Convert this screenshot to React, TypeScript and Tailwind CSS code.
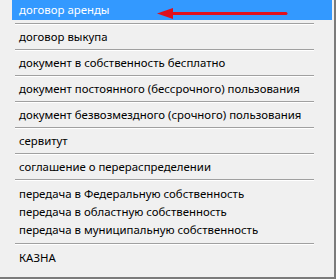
const groups: string[][] = [
  ['договор выкупа'],
  ['документ в собственность бесплатно'],
  ['документ постоянного (бессрочного) пользования'],
  ['документ безвозмездного (срочного) пользования'],
  ['сервитут'],
  ['соглашение о перераспределении'],
];

const transfers = [
  'передача в Федеральную собственность',
  'передача в областную собственность',
  'передача в муниципальную собственность',
];

function Separator({ className = 'h-[7px] pt-[3px]' }: { className?: string }) {
  return (
    <div className={className}>
      <div className="ml-[15px] w-[299px] border-t border-b border-t-[#a0a0a0] border-b-white" />
    </div>
  );
}

function Item({ label, tall = true }: { label: string; tall?: boolean }) {
  return (
    <div className={`ml-[12px] w-[320px] pl-[7px] text-black ${tall ? 'h-[19px] leading-[19px]' : 'h-[18px] leading-[18px]'}`}>
      {label}
    </div>
  );
}

export default function App() {
  return (
    <div
      className="relative w-[336px] h-[279px] overflow-hidden bg-[#f0f0f0] border-r-2 border-b-2 border-[#7b7b7b] text-[11.4px]"
      style={{ fontFamily: '"Noto Sans", "Open Sans", sans-serif' }}
    >
      {/* selected entry */}
      <div className="ml-[12px] w-[320px] h-[20px] leading-[20px] pl-[7px] bg-[#3399ff] text-white">
        договор аренды
      </div>
      <Separator />

      {groups.map((g) => (
        <div key={g[0]}>
          {g.map((label) => (
            <Item key={label} label={label} />
          ))}
          <Separator />
        </div>
      ))}

      <div className="pt-[2px]">
        {transfers.map((label) => (
          <Item key={label} label={label} tall={false} />
        ))}
      </div>
      <Separator className="h-[9px] pt-[4px]" />
      <Item label="КАЗНА" />

      {/* red pointer arrow */}
      <svg className="absolute left-[156px] top-[7px]" width="132" height="13" viewBox="0 0 132 13">
        <line x1="12" y1="6.5" x2="130" y2="6.5" stroke="#e0101c" strokeWidth="3" strokeLinecap="round" />
        <polygon points="1,6.5 17,1 17,12" fill="#e0101c" />
      </svg>
    </div>
  );
}
